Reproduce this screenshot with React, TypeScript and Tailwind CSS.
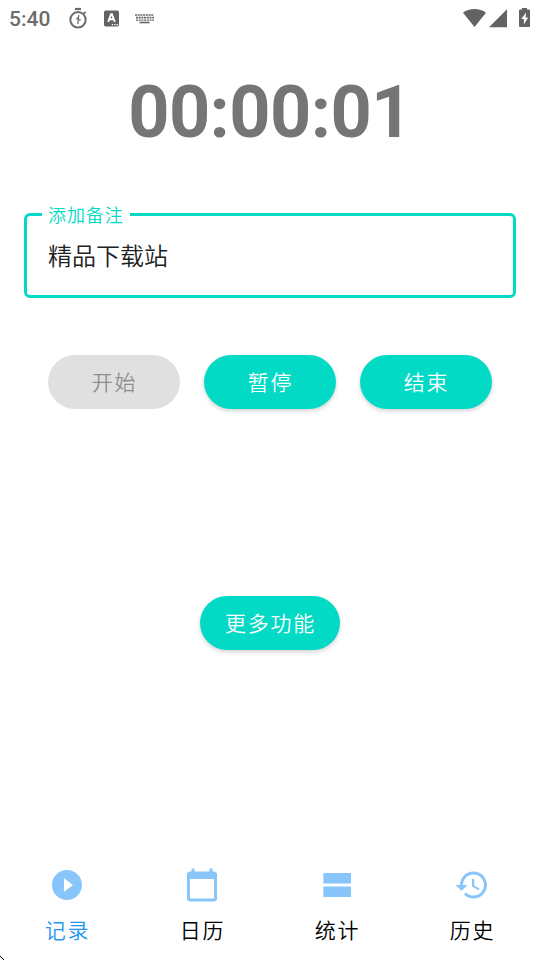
import type { ReactNode } from "react";

const cjk = "font-['Noto_Sans_CJK_SC',sans-serif] font-[350]";

function StatusBar() {
  return (
    <header className="flex h-9 items-center pl-[9px] pr-[10px] text-[#636363]">
      <span className="mt-[2px] w-[42px] whitespace-nowrap font-['Roboto',sans-serif] text-[21px] font-medium leading-9 text-[#6b6b6b]">5:40</span>
      <svg className="ml-[17px]" width="20" height="22" viewBox="0 0 20 22" fill="none" stroke="#6b6b6b">
        <path d="M7 2h6" strokeWidth="2.2" />
        <circle cx="10" cy="12.8" r="7.7" strokeWidth="2" />
        <path d="M15.8 6.6l1.7-1.7" strokeWidth="2" />
        <path d="M10.8 8l-1 9M8.3 12.3l2.2-2.3v2.8h2.3" strokeWidth="1.2" />
      </svg>
      <svg className="ml-4" width="15" height="17" viewBox="0 0 15 17">
        <rect y="0.5" width="15" height="16" rx="1.8" fill="currentColor" />
        <path d="M4.2 11.8l2.9-7.6h.8l2.9 7.6M5.4 9.3h4.2" fill="none" stroke="white" strokeWidth="1.9" />
        <path d="M7.8 14h1.3v1.2H7.8zM10.3 14h1.3v1.2h-1.3zM12.7 14H14v1.2h-1.3z" fill="white" />
      </svg>
      <svg className="ml-4 mt-[2px]" width="19" height="12" viewBox="0 0 19 12" stroke="currentColor" fill="none">
        <path d="M0 2h19M1 4.6h18" strokeWidth="1.7" strokeDasharray="2 .7" />
        <path d="M1 7.1h18" strokeWidth="1.4" strokeDasharray="2 .7" />
        <path d="M4.5 9.5h10" strokeWidth="1.6" />
      </svg>
      <div className="ml-auto flex items-center">
        <svg width="23" height="19" viewBox="0 0 23 19" fill="currentColor">
          <path d="M11.5 18L0 3.7C3.2 1.3 7.1 0 11.5 0S19.8 1.3 23 3.7z" />
        </svg>
        <svg className="ml-[3px]" width="18" height="19" viewBox="0 0 18 19" fill="currentColor">
          <path d="M0 18.3h18V.3z" />
        </svg>
        <svg className="ml-3" width="11" height="20" viewBox="0 0 11 20" fill="currentColor">
          <path d="M3 0h5v1.5h2q1 0 1 1V18q0 1-1 1H1q-1 0-1-1V2.500q0-1 1-1h2z" />
          <path d="M7 4.500L2.300 11h2.600v5.500l4.200-7H6.500z" fill="white" />
        </svg>
      </div>
    </header>
  );
}

function PillButton({ children, className }: { children: ReactNode; className: string }) {
  return (
    <button
      className={`flex h-[54px] items-center justify-center rounded-full pb-[2px] pl-[1px] text-[21px] leading-[30px] tracking-[1.7px] ${className}`}
    >
      {children}
    </button>
  );
}

const active = "bg-[#03dac5] text-white shadow-[0_2px_4px_rgba(0,0,0,0.18)]";

function NavItem({ label, selected, children }: { label: string; selected?: boolean; children: ReactNode }) {
  return (
    <a className={`flex flex-1 flex-col items-center ${selected ? "text-[#2196f3]" : "text-black"}`}>
      <svg className="mr-[1px]" width="36" height="36" viewBox="0 0 24 24" fill="#87c5fa">
        {children}
      </svg>
      <span className="mt-[11px] text-[21px] leading-[30px] tracking-[1.7px]">{label}</span>
    </a>
  );
}

export default function App() {
  return (
    <div className={`relative flex h-[960px] w-[540px] flex-col overflow-hidden bg-white ${cjk}`}>
      <StatusBar />

      <div className="mt-[35px] flex h-[84px] items-center justify-center font-['Roboto',sans-serif] text-[72px] font-bold leading-[84px] tracking-[-0.6px] text-[#757575]">
        00:00:01
      </div>

      <div className="relative mx-6 mt-[58px] flex h-[85px] items-center rounded-[6px] border-[3px] border-[#03dac5] pb-[2px] pl-[21px]">
        <label className="absolute left-[15px] top-[-15px] h-[26px] w-[88px] bg-white pl-[6px] text-[18px] leading-[26px] tracking-[0.9px] text-[#03dac5]">
          添加备注
        </label>
        <span className="text-[24px] leading-9 text-[#212121]">精品下载站</span>
      </div>

      <div className="mt-[57px] flex justify-center gap-6">
        <PillButton className="w-[132px] bg-[#e0e0e0] text-[#8f8f8f]">开始</PillButton>
        <PillButton className={`w-[132px] ${active}`}>暂停</PillButton>
        <PillButton className={`w-[132px] ${active}`}>结束</PillButton>
      </div>

      <div className="mt-[187px] flex justify-center">
        <PillButton className={`w-[140px] ${active}`}>更多功能</PillButton>
      </div>

      <nav className="mt-auto flex h-[93px]">
        <NavItem label="记录" selected>
          <path d="M12 2C6.48 2 2 6.48 2 12s4.48 10 10 10 10-4.48 10-10S17.52 2 12 2zm-2 14.5v-9l6 4.5-6 4.5z" />
        </NavItem>
        <NavItem label="日历">
          <path d="M20 3h-1V1h-2v2H7V1H5v2H4c-1.1 0-2 .9-2 2v16c0 1.100.9 2 2 2h16c1.100 0 2-.9 2-2V5c0-1.100-.9-2-2-2zm0 18H4V8h16v13z" />
        </NavItem>
        <NavItem label="统计">
          <path d="M2.900 4h18.400v7H2.900zM2.900 13h18.400v7H2.900z" />
        </NavItem>
        <NavItem label="历史">
          <path d="M13 3c-4.97 0-9 4.03-9 9H1l3.89 3.89.07.14L9 12H6c0-3.87 3.13-7 7-7s7 3.13 7 7-3.13 7-7 7c-1.93 0-3.68-.79-4.94-2.06l-1.42 1.42C8.27 19.99 10.51 21 13 21c4.97 0 9-4.03 9-9s-4.03-9-9-9zm-1 5v5l4.28 2.54.72-1.21-3.5-2.08V8H12z" />
        </NavItem>
      </nav>

      <svg className="absolute bottom-0 left-0" width="4" height="4" shapeRendering="crispEdges">
        <path d="M0 0h1v1H0zM1 1h1v1H1zM2 2h1v1H2zM3 3h1v1H3z" />
      </svg>
    </div>
  );
}
